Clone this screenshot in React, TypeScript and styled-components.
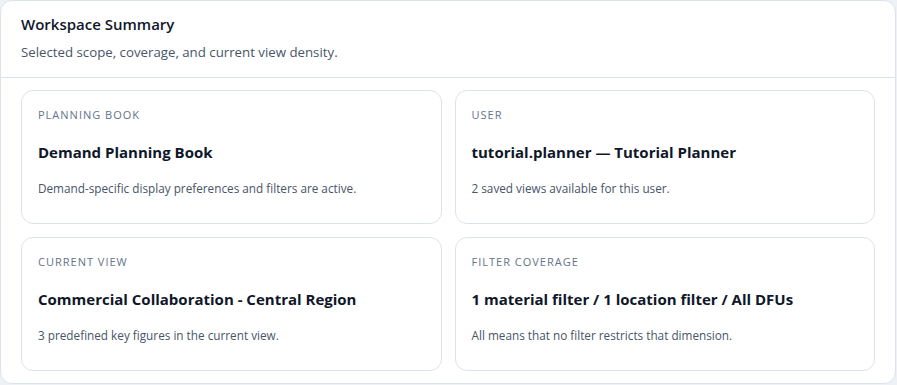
import React from "react";
import styled, { createGlobalStyle } from "styled-components";

const GlobalStyle = createGlobalStyle`
  html, body {
    margin: 0;
    padding: 0;
    background: #eef2f7;
  }
  body {
    font-family: "Open Sans", "Noto Sans", Arial, sans-serif;
    -webkit-font-smoothing: antialiased;
  }
  * { box-sizing: border-box; }
`;

const Panel = styled.section`
  width: 896px;
  height: 384px;
  background: #ffffff;
  border: 1px solid #dbe2ec;
  border-radius: 12px;
  display: flex;
  flex-direction: column;
  overflow: hidden;
`;

const Header = styled.header`
  padding: 13px 20px 16px;
  border-bottom: 1px solid #dbe2ec;
  display: flex;
  flex-direction: column;
  gap: 9px;
`;

const Title = styled.h2`
  margin: 0;
  font-size: 15px;
  line-height: 20px;
  font-weight: 600;
  color: #0f172a;
`;

const Subtitle = styled.p`
  margin: 0;
  font-size: 13.25px;
  line-height: 18px;
  color: #475569;
`;

const Grid = styled.div`
  flex: 1;
  display: grid;
  grid-template-columns: 1fr 1fr;
  grid-template-rows: 1fr 1fr;
  gap: 13px;
  padding: 12px 20px 12px;
`;

const Card = styled.div`
  border: 1px solid #dbe2ec;
  border-radius: 12px;
  padding: 16px 16px;
  display: flex;
  flex-direction: column;
`;

const Label = styled.div`
  font-size: 11px;
  line-height: 16px;
  letter-spacing: 1px;
  text-transform: uppercase;
  color: #64748b;
`;

const Value = styled.div`
  margin-top: 19px;
  font-size: 15px;
  line-height: 20px;
  font-weight: 700;
  color: #0f172a;
`;

const Note = styled.div`
  margin-top: 17px;
  font-size: 11.75px;
  line-height: 18px;
  color: #475569;
`;

const items = [
  {
    label: "Planning Book",
    value: "Demand Planning Book",
    note: "Demand-specific display preferences and filters are active.",
  },
  {
    label: "User",
    value: "tutorial.planner — Tutorial Planner",
    note: "2 saved views available for this user.",
  },
  {
    label: "Current View",
    value: "Commercial Collaboration - Central Region",
    note: "3 predefined key figures in the current view.",
  },
  {
    label: "Filter Coverage",
    value: "1 material filter / 1 location filter / All DFUs",
    note: "All means that no filter restricts that dimension.",
  },
];

export default function App() {
  return (
    <>
      <GlobalStyle />
      <Panel>
        <Header>
          <Title>Workspace Summary</Title>
          <Subtitle>Selected scope, coverage, and current view density.</Subtitle>
        </Header>
        <Grid>
          {items.map((it) => (
            <Card key={it.label}>
              <Label>{it.label}</Label>
              <Value>{it.value}</Value>
              <Note>{it.note}</Note>
            </Card>
          ))}
        </Grid>
      </Panel>
    </>
  );
}
